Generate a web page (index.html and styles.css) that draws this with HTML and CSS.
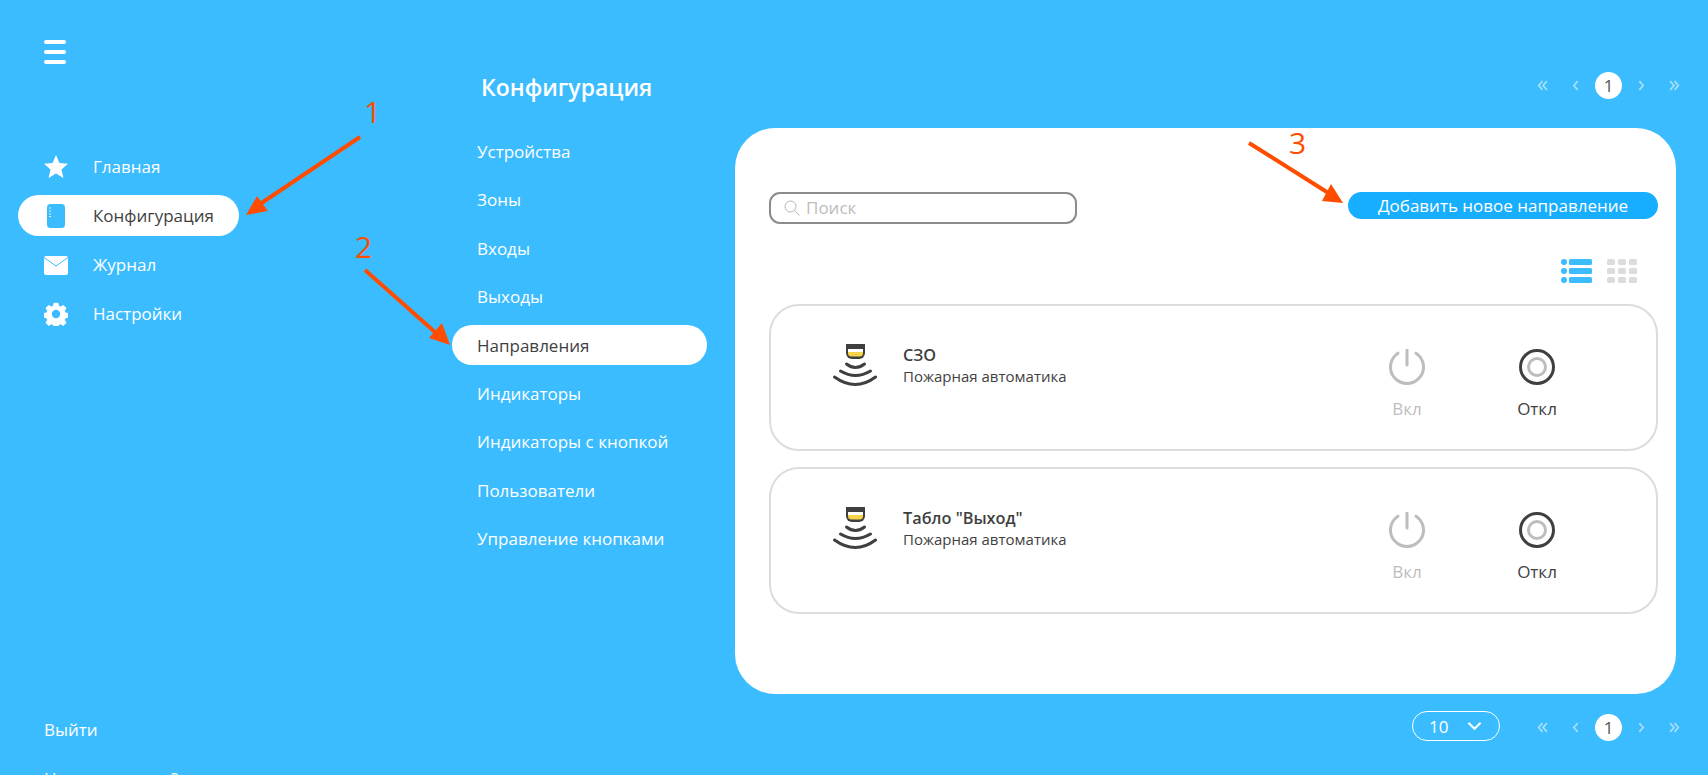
FILE: index.html
```html
<!DOCTYPE html>
<html lang="ru">
    <head>
        <meta charset="utf-8" />
        <title>Конфигурация</title>
        <link rel="stylesheet" href="styles.css">
    </head>
    <body>
        <div class="page">
            <aside class="sidebar">
                <div class="burger"><span></span><span></span><span></span></div>
                <nav class="main-nav">
                    <a class="main-nav-item">
                        <svg class="nav-icon" viewBox="0 0 24 24"><path fill="#fff" d="M12 0l3.400 8 8.600.8-6.500 5.700 1.950 8.500L12 18.500 4.550 23l1.950-8.500L0 8.800 8.600 8z"/></svg>
                        <span>Главная</span>
                    </a>
                    <a class="main-nav-item active">
                        <svg class="nav-icon" viewBox="0 0 24 24"><rect x="3" y="0" width="18" height="24" rx="3.500" fill="#3bbcff"/><path stroke="#dff4ff" stroke-width="1" d="M5 4h2M5 7h2M5 10h2M5 12.500h2"/></svg>
                        <span>Конфигурация</span>
                    </a>
                    <a class="main-nav-item">
                        <svg class="nav-icon" viewBox="0 0 24 24"><rect x="0" y="3" width="24" height="19" rx="2" fill="#fff"/><path fill="none" stroke="#3bbcff" stroke-width="1" d="M0 4.500l12 8.500 12-8.500"/></svg>
                        <span>Журнал</span>
                    </a>
                    <a class="main-nav-item">
                        <svg class="nav-icon" viewBox="0 0 24 24"><path fill="#fff" fill-rule="evenodd" d="M9.700 1h4.600l.6 3 1.800.8 2.600-1.700 3.200 3.200-1.700 2.600.8 1.800 3 .6v4.600l-3 .6-.8 1.800 1.700 2.600-3.200 3.200-2.600-1.700-1.800.8-.6 3H9.700l-.6-3-1.800-.8-2.600 1.700-3.200-3.200 1.700-2.600-.8-1.800-3-.6v-4.600l3-.6.8-1.800-1.700-2.600 3.200-3.200 2.600 1.700 1.800-.8zM12 8a4.200 4.200 0 1 0 0 8.400A4.200 4.200 0 0 0 12 8z" transform="translate(0 -.2)"/></svg>
                        <span>Настройки</span>
                    </a>
                </nav>
                <div class="sidebar-bottom">
                    <a class="bottom-link">Выйти</a>
                    <a class="bottom-link">Нужна помощь?</a>
                </div>
            </aside>

            <section class="submenu">
                <h1 class="submenu-title">Конфигурация</h1>
                <ul class="submenu-list">
                    <li>Устройства</li>
                    <li>Зоны</li>
                    <li>Входы</li>
                    <li>Выходы</li>
                    <li class="active">Направления</li>
                    <li>Индикаторы</li>
                    <li>Индикаторы с кнопкой</li>
                    <li>Пользователи</li>
                    <li>Управление кнопками</li>
                </ul>
            </section>

            <main class="content">
                <div class="pager-row">
                    <div class="pager">
                        <svg class="pager-arrow" viewBox="0 0 10 10"><path d="M5 1L1.500 5 5 9M9 1L5.500 5 9 9"/></svg>
                        <svg class="pager-arrow" viewBox="0 0 10 10"><path d="M7 1L3.500 5 7 9"/></svg>
                        <span class="pager-current">1</span>
                        <svg class="pager-arrow" viewBox="0 0 10 10"><path d="M3 1L6.500 5 3 9"/></svg>
                        <svg class="pager-arrow" viewBox="0 0 10 10"><path d="M1 1L4.500 5 1 9M5 1L8.500 5 5 9"/></svg>
                    </div>
                </div>
                <div class="panel">
                    <div class="toolbar">
                        <label class="search">
                            <svg class="search-icon" viewBox="0 0 16 16"><circle cx="6.500" cy="6.500" r="5.500" fill="none" stroke="#b5b5b5" stroke-width="1"/><path stroke="#b5b5b5" stroke-width="1" d="M10.500 10.500l5 5"/></svg>
                            <span>Поиск</span>
                        </label>
                        <button class="add-btn">Добавить новое направление</button>
                    </div>
                    <div class="view-switch">
                        <svg class="view-icon" viewBox="0 0 31 25" fill="#3bbcff">
                            <circle cx="3" cy="3" r="3"/><rect x="8" y="0" width="23" height="6" rx="1.500"/>
                            <circle cx="3" cy="12" r="3"/><rect x="8" y="9" width="23" height="6" rx="1.500"/>
                            <circle cx="3" cy="21" r="3"/><rect x="8" y="18" width="23" height="6" rx="1.500"/>
                        </svg>
                        <svg class="view-icon" viewBox="0 0 31 25" fill="#dcdcdc">
                            <rect x="0" y="0" width="8" height="6" rx="1.500"/><rect x="11" y="0" width="8" height="6" rx="1.500"/><rect x="22" y="0" width="8" height="6" rx="1.500"/>
                            <rect x="0" y="9" width="8" height="6" rx="1.500"/><rect x="11" y="9" width="8" height="6" rx="1.500"/><rect x="22" y="9" width="8" height="6" rx="1.500"/>
                            <rect x="0" y="18" width="8" height="6" rx="1.500"/><rect x="11" y="18" width="8" height="6" rx="1.500"/><rect x="22" y="18" width="8" height="6" rx="1.500"/>
                        </svg>
                    </div>
                    <div class="device-list">
                        <div class="device">
                            <svg class="device-icon" viewBox="0 0 44 43">
                                <path fill="#3f3f3f" d="M13 0h19v9a6 6 0 0 1-6 6h-7a6 6 0 0 1-6-6z"/>
                                <rect x="15" y="5" width="15" height="3" fill="#fff"/>
                                <path fill="#f7d44a" d="M15 8h15v1a3.500 3.500 0 0 1-3.500 3.500h-8A3.500 3.500 0 0 1 15 9z"/>
                                <g fill="none" stroke="#3f3f3f" stroke-width="3" stroke-linecap="round">
                                    <path d="M13.500 20q9 7 18 0"/><path d="M7.500 27q15 9 30 0"/><path d="M1.500 33q21 15 41 0"/>
                                </g>
                            </svg>
                            <div class="device-info">
                                <div class="device-name">СЗО</div>
                                <div class="device-type">Пожарная автоматика</div>
                            </div>
                            <div class="device-actions">
                                <div class="action muted">
                                    <svg class="action-icon" viewBox="0 0 36 36"><path fill="none" stroke="#bdbdbd" stroke-width="3" stroke-linecap="round" d="M9 4.200a16.500 16.500 0 1 0 18 0M18 1v15"/></svg>
                                    <span>Вкл</span>
                                </div>
                                <div class="action">
                                    <svg class="action-icon" viewBox="0 0 36 36"><circle cx="18" cy="18" r="16.500" fill="none" stroke="#3f3f3f" stroke-width="3"/><circle cx="18" cy="18" r="8.500" fill="none" stroke="#bdbdbd" stroke-width="3"/></svg>
                                    <span>Откл</span>
                                </div>
                            </div>
                        </div>
                        <div class="device">
                            <svg class="device-icon" viewBox="0 0 44 43">
                                <path fill="#3f3f3f" d="M13 0h19v9a6 6 0 0 1-6 6h-7a6 6 0 0 1-6-6z"/>
                                <rect x="15" y="5" width="15" height="3" fill="#fff"/>
                                <path fill="#f7d44a" d="M15 8h15v1a3.500 3.500 0 0 1-3.500 3.500h-8A3.500 3.500 0 0 1 15 9z"/>
                                <g fill="none" stroke="#3f3f3f" stroke-width="3" stroke-linecap="round">
                                    <path d="M13.500 20q9 7 18 0"/><path d="M7.500 27q15 9 30 0"/><path d="M1.500 33q21 15 41 0"/>
                                </g>
                            </svg>
                            <div class="device-info">
                                <div class="device-name">Табло "Выход"</div>
                                <div class="device-type">Пожарная автоматика</div>
                            </div>
                            <div class="device-actions">
                                <div class="action muted">
                                    <svg class="action-icon" viewBox="0 0 36 36"><path fill="none" stroke="#bdbdbd" stroke-width="3" stroke-linecap="round" d="M9 4.200a16.500 16.500 0 1 0 18 0M18 1v15"/></svg>
                                    <span>Вкл</span>
                                </div>
                                <div class="action">
                                    <svg class="action-icon" viewBox="0 0 36 36"><circle cx="18" cy="18" r="16.500" fill="none" stroke="#3f3f3f" stroke-width="3"/><circle cx="18" cy="18" r="8.500" fill="none" stroke="#bdbdbd" stroke-width="3"/></svg>
                                    <span>Откл</span>
                                </div>
                            </div>
                        </div>
                    </div>
                </div>
                <div class="footer-row">
                    <div class="page-size"><span>10</span><svg class="page-size-arrow" viewBox="0 0 16 10"><path fill="none" stroke="#fff" stroke-width="2.200" d="M1.500 1.500L8 8l6.500-6.500"/></svg></div>
                    <div class="pager">
                        <svg class="pager-arrow" viewBox="0 0 10 10"><path d="M5 1L1.500 5 5 9M9 1L5.500 5 9 9"/></svg>
                        <svg class="pager-arrow" viewBox="0 0 10 10"><path d="M7 1L3.500 5 7 9"/></svg>
                        <span class="pager-current">1</span>
                        <svg class="pager-arrow" viewBox="0 0 10 10"><path d="M3 1L6.500 5 3 9"/></svg>
                        <svg class="pager-arrow" viewBox="0 0 10 10"><path d="M1 1L4.500 5 1 9M5 1L8.500 5 5 9"/></svg>
                    </div>
                </div>
            </main>
        </div>

        <!-- пометки поверх скриншота -->
        <div class="mark mark-1">1</div>
        <div class="mark mark-2">2</div>
        <div class="mark mark-3">3</div>
        <svg class="arrows" viewBox="0 0 1708 775">
            <g stroke="#ff4d00" stroke-width="4" fill="#ff4d00">
                <path d="M360 137L260 204"/><path stroke="none" d="M246 215L257 196 268 211z"/>
                <path d="M365 270L436 333"/><path stroke="none" d="M450 345L429 338 442 323z"/>
                <path d="M1249 143L1330 194"/><path stroke="none" d="M1343 203L1322 201 1331 184z"/>
            </g>
        </svg>
    </body>
</html>
```

FILE: styles.css
```css
* {
    box-sizing: border-box;
}
html, body {
    margin: 0;
    height: 100%;
    overflow: hidden;
}
body {
    background: #3bbcff;
    font-family: "Open Sans", "Noto Sans", sans-serif;
    font-size: 17px;
    color: #fff;
}
.page {
    display: flex;
    height: 775px;
}

/* левая колонка */
.sidebar {
    width: 452px;
    flex: none;
    padding: 40px 0 0 18px;
    display: flex;
    flex-direction: column;
}
.burger {
    width: 22px;
    margin-left: 26px;
    display: flex;
    flex-direction: column;
    gap: 6px;
}
.burger span {
    height: 4px;
    border-radius: 2px;
    background: #fff;
}
.main-nav {
    margin-top: 82px;
    display: flex;
    flex-direction: column;
    gap: 8px;
}
.main-nav-item {
    width: 221px;
    height: 41px;
    padding-left: 26px;
    border-radius: 21px;
    display: flex;
    align-items: center;
    gap: 25px;
}
.main-nav-item.active {
    background: #fff;
    color: #3f3f3f;
}
.nav-icon {
    width: 24px;
    height: 24px;
    flex: none;
}
.sidebar-bottom {
    margin-top: auto;
    margin-left: 26px;
    display: flex;
    flex-direction: column;
    gap: 26px;
    height: 57px;
    line-height: 23px;
}
.bottom-link {
    flex: none;
}

/* средняя колонка */
.submenu {
    width: 283px;
    flex: none;
}
.submenu-title {
    margin: 72px 0 0 29px;
    font-size: 23px;
    line-height: 30px;
    font-weight: 600;
}
.submenu-list {
    list-style: none;
    margin: 29px 0 0;
    padding: 0;
    width: 255px;
}
.submenu-list li {
    height: 40px;
    margin-bottom: 8.400px;
    padding-left: 25px;
    border-radius: 20px;
    line-height: 42px;
}
.submenu-list li.active {
    background: #fff;
    color: #3f3f3f;
}

/* правая колонка */
.content {
    width: 941px;
    flex: none;
    display: flex;
    flex-direction: column;
}
.pager-row {
    height: 128px;
    padding-top: 72px;
    display: flex;
    justify-content: flex-end;
}
.pager {
    width: 165px;
    height: 27px;
    margin-right: -15px;
    display: grid;
    grid-template-columns: repeat(5, 33px);
    justify-items: center;
    align-items: center;
}
.pager-arrow {
    width: 11px;
    height: 11px;
    fill: none;
    stroke: #a9dffb;
    stroke-width: 1.500;
}
.pager-current {
    width: 27px;
    height: 27px;
    border-radius: 50%;
    background: #fff;
    color: #555;
    text-align: center;
    line-height: 27px;
}
.panel {
    height: 566px;
    background: #fff;
    border-radius: 40px;
    padding: 64px 18px 0 34px;
    color: #3f3f3f;
}
.toolbar {
    display: flex;
    justify-content: space-between;
    align-items: flex-start;
}
.search {
    width: 308px;
    height: 32px;
    border: 2px solid #8c8c8c;
    border-radius: 11px;
    padding: 0 0 1px 13px;
    display: flex;
    align-items: center;
    gap: 6px;
    color: #bdbdbd;
}
.search-icon {
    width: 16px;
    height: 16px;
}
.add-btn {
    width: 310px;
    height: 27px;
    border: 0;
    border-radius: 14px;
    background: #17aeff;
    color: #fff;
    font: inherit;
    padding: 0;
}
.view-switch {
    margin-top: 35px;
    margin-right: 20px;
    display: flex;
    justify-content: flex-end;
    gap: 15px;
}
.view-icon {
    width: 31px;
    height: 25px;
}
.device-list {
    margin-top: 20px;
    display: flex;
    flex-direction: column;
    gap: 16px;
}
.device {
    height: 147px;
    border: 2px solid #dcdcdc;
    border-radius: 30px;
    padding: 38px 0 0 62px;
    display: flex;
    align-items: flex-start;
}
.device-icon {
    width: 44px;
    height: 43px;
    flex: none;
}
.device-info {
    margin-top: 1px;
    margin-left: 26px;
    width: 407px;
}
.device-name {
    font-size: 16.300px;
    font-weight: 600;
    line-height: 21px;
}
.device-type {
    font-size: 15px;
    line-height: 20px;
}
.device-actions {
    display: flex;
    margin-left: 32px;
    margin-top: 5px;
}
.action {
    width: 130px;
    display: flex;
    flex-direction: column;
    align-items: center;
    gap: 13px;
    line-height: 22px;
}
.action.muted {
    color: #bdbdbd;
}
.action-icon {
    width: 36px;
    height: 36px;
}
.footer-row {
    margin-top: 17px;
    display: flex;
    justify-content: flex-end;
    align-items: flex-end;
    gap: 26px;
}
.page-size {
    width: 88px;
    height: 30px;
    border: 1px solid #fff;
    border-radius: 15px;
    padding: 0 17px 0 16px;
    display: flex;
    align-items: center;
    justify-content: space-between;
}
.page-size-arrow {
    width: 15px;
    height: 10px;
}

/* стрелки и цифры */
.arrows {
    position: absolute;
    left: 0;
    top: 0;
    width: 1708px;
    height: 775px;
    pointer-events: none;
}
.mark {
    position: absolute;
    color: #ff4d00;
    font-size: 30px;
    line-height: 32px;
}
.mark-1 {
    left: 364px;
    top: 96px;
}
.mark-2 {
    left: 355px;
    top: 231px;
}
.mark-3 {
    left: 1289px;
    top: 127px;
}
```
